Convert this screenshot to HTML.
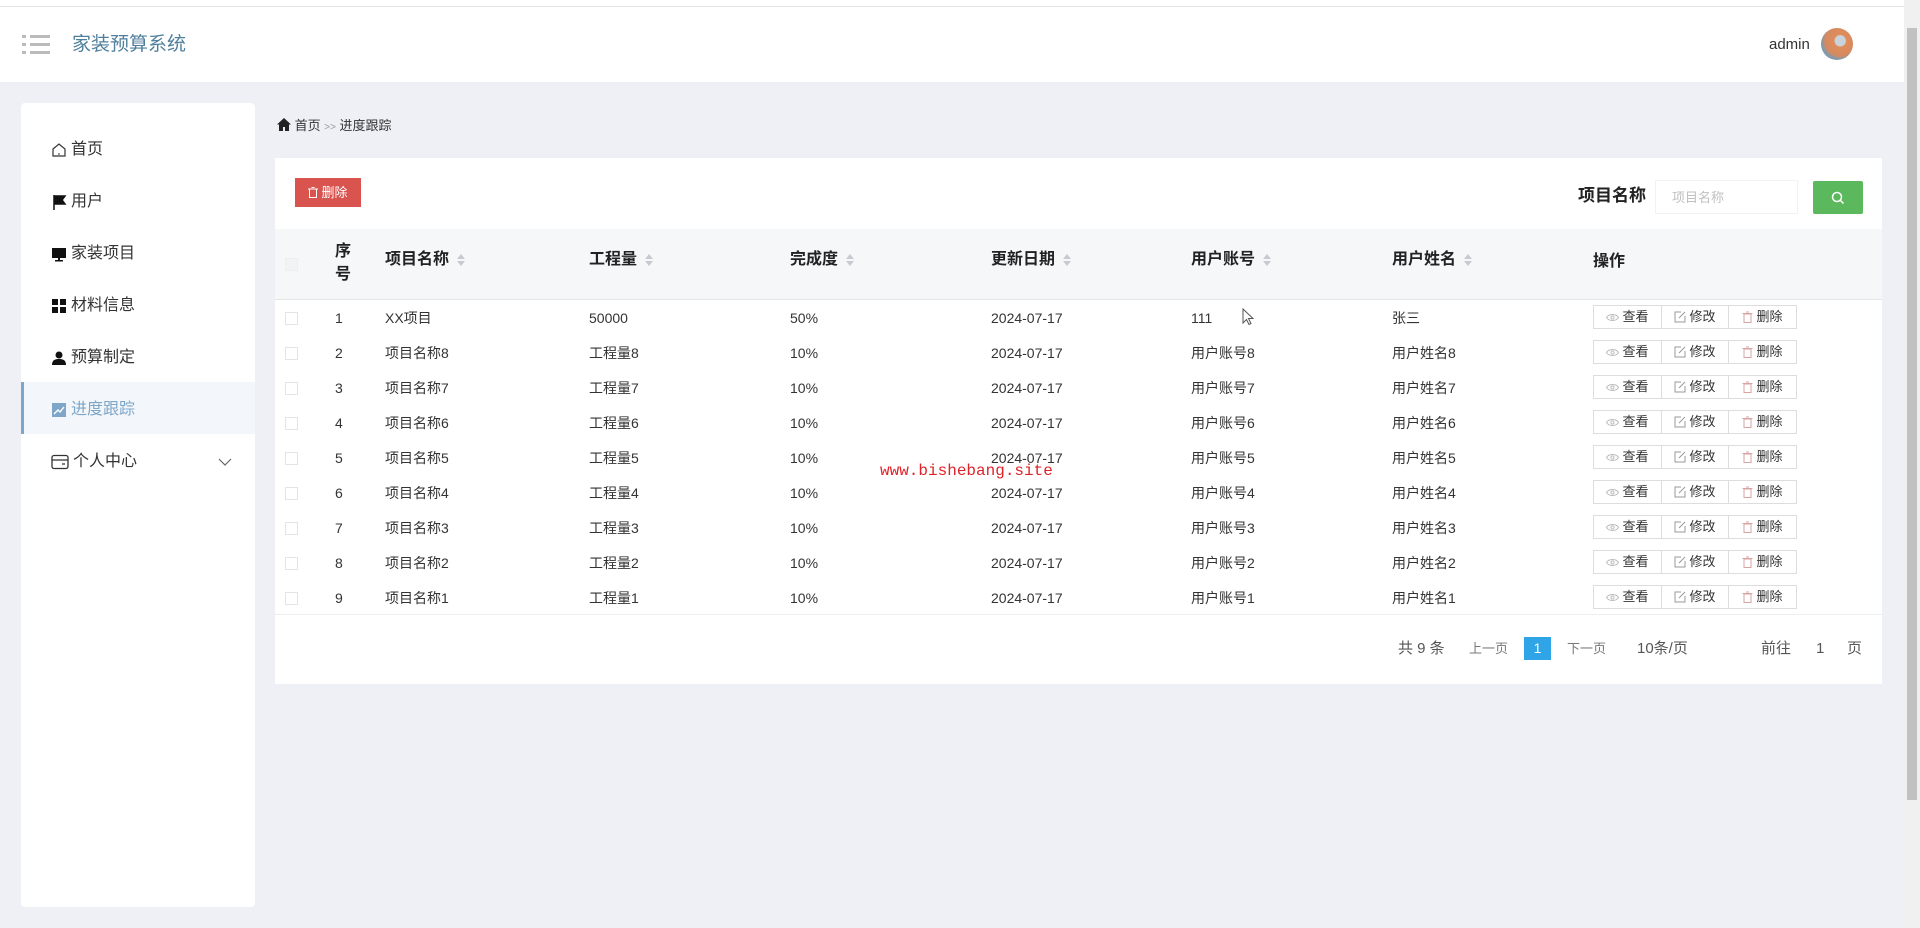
<!DOCTYPE html>
<html><head><meta charset="utf-8">
<style>
*{box-sizing:border-box;margin:0;padding:0}
body{width:1920px;height:928px;overflow:hidden;background:#eef0f6;font-family:"Liberation Sans","Noto Sans CJK SC",sans-serif;color:#333;position:relative}
.top{position:absolute;left:0;top:7px;width:1904px;height:75px;background:#fff}
.topline{position:absolute;left:0;top:0;width:1904px;height:7px;background:#fff}
.scroll{position:absolute;right:0;top:0;width:16px;height:928px;background:#f0f0f0}
.scroll .thumb{position:absolute;left:3px;top:28px;width:10px;height:772px;background:#c1c1c1}
.abs{position:absolute;white-space:nowrap;line-height:20px}
.side{position:absolute;left:21px;top:103px;width:234px;height:804px;background:#fff;border-radius:4px}
.mi{position:absolute;left:30px;font-size:16px;line-height:20px;color:#333;display:flex;align-items:center;gap:4px}
.active{position:absolute;left:0;top:279px;width:234px;height:52px;background:#f3f6fa;border-left:3px solid #7ea6c9}
.card{position:absolute;left:275px;top:158px;width:1607px;height:526px;background:#fff}
.th{position:absolute;font-weight:bold;font-size:16px;line-height:20px;color:#222;white-space:nowrap}
.td{position:absolute;font-size:14px;line-height:18px;height:18px;color:#333;white-space:nowrap}
.cb{position:absolute;width:13px;height:13px;border:1px solid #e4e4e4;background:#fff}
.sort{display:inline-block;width:8px;height:12px;margin-left:8px;vertical-align:middle;position:relative}
.sort:before{content:"";position:absolute;left:0;top:0;border:4px solid transparent;border-bottom:5px solid #c7cbd1;border-top:0}
.sort:after{content:"";position:absolute;left:0;top:7px;border:4px solid transparent;border-top:5px solid #c7cbd1;border-bottom:0}
.btn{position:absolute;height:24px;border:1px solid #ddd;background:#fff;font-size:13px;line-height:16px;color:#333;display:flex;align-items:center;justify-content:center;gap:3px}
</style></head><body>
<div class="topline"></div>
<div class="top"></div>
<div style="position:absolute;left:0;top:6px;width:1904px;height:1px;background:#e2e2e2"></div>
<svg class="abs" style="left:22px;top:34px" width="28" height="22" viewBox="0 0 28 22"><g fill="#bbb"><rect x="0" y="1" width="4" height="3"/><rect x="8" y="1" width="20" height="3"/><rect x="0" y="9" width="4" height="3"/><rect x="8" y="9" width="20" height="3"/><rect x="0" y="17" width="4" height="3"/><rect x="8" y="17" width="20" height="3"/></g></svg>
<div class="abs" style="left:72px;top:33px;font-size:19px;line-height:24px;color:#4f7f9c">家装预算系统</div>
<div class="abs" style="left:1769px;top:35px;font-size:15px;color:#333">admin</div>
<div class="abs" style="left:1821px;top:28px;width:32px;height:32px;border-radius:50%;background:radial-gradient(circle at 60% 40%,#c9d3dc 20%,#e08c5a 22%,#d58a60 55%,#7a9bb2 70%)"></div>
<div class="scroll"><div class="thumb"></div></div>

<div class="side">
<div class="active"></div>
<div class="mi" style="top:37px"><svg width="16" height="16" viewBox="0 0 16 16"><path d="M2 7L8 2l6 5v7H2z" fill="none" stroke="#333" stroke-width="1.2"/><path d="M7 12h2" stroke="#333"/></svg>首页</div>
<div class="mi" style="top:89px"><svg width="16" height="16" viewBox="0 0 16 16"><path d="M3 1v15M3 2h11l-3 4 3 4H3" fill="#111" stroke="#111" stroke-width="1.5"/></svg>用户</div>
<div class="mi" style="top:141px"><svg width="16" height="16" viewBox="0 0 16 16"><rect x="1" y="2" width="14" height="10" fill="#111"/><rect x="7" y="12" width="2" height="2" fill="#111"/><rect x="4" y="14" width="8" height="1.5" fill="#111"/></svg>家装项目</div>
<div class="mi" style="top:193px"><svg width="16" height="16" viewBox="0 0 16 16"><g fill="#111"><rect x="1" y="1" width="6" height="6"/><rect x="9" y="1" width="6" height="6"/><rect x="1" y="9" width="6" height="6"/><rect x="9" y="9" width="6" height="6"/></g></svg>材料信息</div>
<div class="mi" style="top:245px"><svg width="16" height="16" viewBox="0 0 16 16"><circle cx="8" cy="5" r="3.5" fill="#111"/><path d="M1 15c0-5 3-6 7-6s7 1 7 6z" fill="#111"/></svg>预算制定</div>
<div class="mi" style="top:297px;color:#7ea6c9"><svg width="16" height="16" viewBox="0 0 16 16"><rect x="1" y="1" width="14" height="14" fill="#7ea6c9"/><path d="M3 12l4-4 2 2 4-5" stroke="#fff" fill="none" stroke-width="1.4"/></svg>进度跟踪</div>
<div class="mi" style="top:349px"><svg width="18" height="16" viewBox="0 0 18 16"><rect x="1" y="1.5" width="16" height="13" rx="2" fill="none" stroke="#333" stroke-width="1.3"/><path d="M1 6h16M11 10h3" stroke="#333" stroke-width="1.3"/></svg>个人中心</div>
<svg class="abs" style="left:197px;top:354px" width="14" height="10" viewBox="0 0 14 10"><path d="M1 2l6 6 6-6" stroke="#666" fill="none" stroke-width="1.2"/></svg>
</div>

<div class="abs" style="left:277px;top:116px;font-size:13px;color:#333"><svg width="14" height="13" viewBox="0 0 14 13" style="vertical-align:-1px"><path d="M7 0L0 6.5h2V13h4V9h2v4h4V6.5h2z" fill="#222"/></svg> 首页 <span style="color:#999;font-size:10px">&gt;&gt;</span> 进度跟踪</div>

<div class="card">
<div class="abs" style="left:20px;top:20px;width:66px;height:29px;background:#d9534f;color:#fff;font-size:13px;display:flex;align-items:center;justify-content:center;gap:3px"><svg width="10" height="11" viewBox="0 0 10 11"><rect x="1.5" y="2" width="7" height="8.5" fill="none" stroke="#fff"/><path d="M0 2h10M3.5 0.5h3" stroke="#fff"/></svg>删除</div>
<div class="abs" style="left:1303px;top:28px;font-size:17px;font-weight:bold;color:#222">项目名称</div>
<div class="abs" style="left:1380px;top:22px;width:143px;height:34px;background:#fff;border:1px solid #f2f2f2;font-size:13px;color:#c0c0c0;padding:7px 0 0 16px">项目名称</div>
<div class="abs" style="left:1538px;top:23px;width:50px;height:33px;background:#5cb85c;border-radius:2px"><svg style="position:absolute;left:18px;top:10px" width="14" height="14" viewBox="0 0 14 14"><circle cx="6" cy="6" r="4.5" stroke="#fff" fill="none" stroke-width="1.5"/><path d="M9.5 9.5l3 3" stroke="#fff" stroke-width="1.5"/></svg></div>

<div class="abs" style="left:0;top:71px;width:1607px;height:71px;background:#f6f7f9;border-bottom:1px solid #e6e6e6"></div>
<div class="cb" style="left:10px;top:100px;background:#f3f3f3;border-color:#eee"></div>
<div class="th" style="left:60px;top:82px;line-height:23px">序<br>号</div>
<div class="th" style="left:110px;top:92px">项目名称<span class="sort"></span></div>
<div class="th" style="left:314px;top:92px">工程量<span class="sort"></span></div>
<div class="th" style="left:515px;top:92px">完成度<span class="sort"></span></div>
<div class="th" style="left:716px;top:92px">更新日期<span class="sort"></span></div>
<div class="th" style="left:916px;top:92px">用户账号<span class="sort"></span></div>
<div class="th" style="left:1117px;top:92px">用户姓名<span class="sort"></span></div>
<div class="th" style="left:1318px;top:94px">操作</div>
<div class="abs" style="left:0;top:456px;width:1607px;height:1px;background:#eee"></div>
<div id="rows"></div>

<div class="abs" style="left:1123px;top:481px;font-size:15px;color:#555">共 9 条</div>
<div class="abs" style="left:1194px;top:481px;font-size:13px;color:#777">上一页</div>
<div class="abs" style="left:1249px;top:479px;width:27px;height:23px;background:#2fa4e7;color:#fff;font-size:14px;text-align:center;line-height:23px">1</div>
<div class="abs" style="left:1292px;top:481px;font-size:13px;color:#777">下一页</div>
<div class="abs" style="left:1362px;top:481px;font-size:15px;color:#555">10条/页</div>
<div class="abs" style="left:1486px;top:481px;font-size:15px;color:#555">前往</div>
<div class="abs" style="left:1541px;top:481px;font-size:15px;color:#555">1</div>
<div class="abs" style="left:1572px;top:481px;font-size:15px;color:#555">页</div>
</div>

<div class="abs" style="left:880px;top:461px;font-family:'Liberation Mono',monospace;font-size:16px;color:#e0222a">www.bishebang.site</div>
<svg class="abs" style="left:1242px;top:308px" width="12" height="18" viewBox="0 0 12 18"><path d="M1 1v14l3.5-3.5 2.5 5 2-1-2.5-5H11z" fill="#fff" stroke="#555"/></svg>

<script>
var d=[["1","XX项目","50000","50%","111","张三"]];
for(var i=8;i>=1;i--)d.push([String(10-i),"项目名称"+i,"工程量"+i,"10%","用户账号"+i,"用户姓名"+i]);
var h="";
var eye='<svg width="13" height="9" viewBox="0 0 13 9"><path d="M0.5 4.5C3 0.5 10 0.5 12.5 4.5 10 8.5 3 8.5 0.5 4.5z" fill="none" stroke="#bbb"/><circle cx="6.5" cy="4.5" r="1.6" fill="none" stroke="#bbb"/></svg>';
var ed='<svg width="12" height="12" viewBox="0 0 12 12"><path d="M7 1H1v10h10V5" fill="none" stroke="#999"/><path d="M5 7l6-6" stroke="#999"/></svg>';
var tr='<svg width="11" height="12" viewBox="0 0 11 12"><rect x="2" y="3" width="7" height="8.5" fill="none" stroke="#d7a3a3"/><path d="M0.5 2.5h10M4 1h3" stroke="#d7a3a3"/></svg>';
d.forEach(function(r,k){var y=160+k*35;
var t=(y-9);
h+='<div class="cb" style="left:10px;top:'+(y-6)+'px"></div>';
h+='<div class="td" style="left:60px;top:'+t+'px">'+r[0]+'</div>';
h+='<div class="td" style="left:110px;top:'+t+'px">'+r[1]+'</div>';
h+='<div class="td" style="left:314px;top:'+t+'px">'+r[2]+'</div>';
h+='<div class="td" style="left:515px;top:'+t+'px">'+r[3]+'</div>';
h+='<div class="td" style="left:716px;top:'+t+'px">2024-07-17</div>';
h+='<div class="td" style="left:916px;top:'+t+'px">'+r[4]+'</div>';
h+='<div class="td" style="left:1117px;top:'+t+'px">'+r[5]+'</div>';
h+='<div class="btn" style="left:1318px;top:'+(y-13)+'px;width:69px">'+eye+'查看</div>';
h+='<div class="btn" style="left:1386px;top:'+(y-13)+'px;width:68px">'+ed+'修改</div>';
h+='<div class="btn" style="left:1453px;top:'+(y-13)+'px;width:69px">'+tr+'删除</div>';
});
document.getElementById("rows").outerHTML=h;
</script>
</body></html>
